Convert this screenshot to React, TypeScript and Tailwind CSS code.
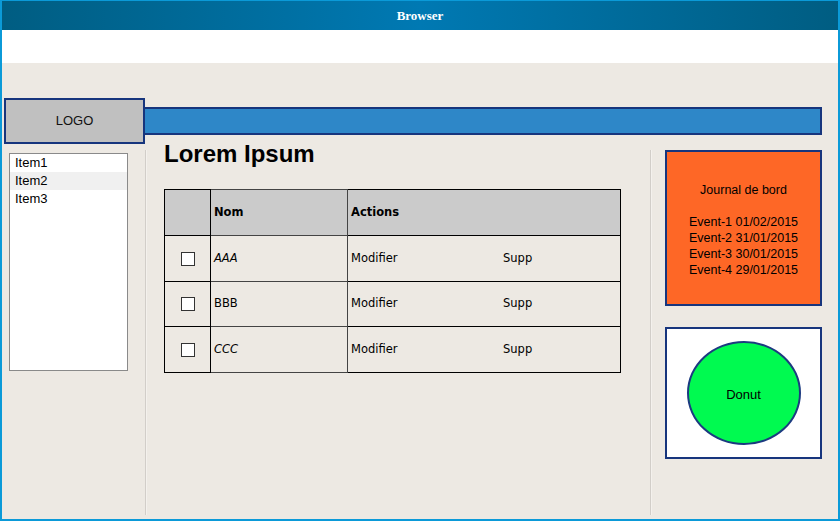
import React from "react";

const rows = [
  { name: "AAA", italic: true },
  { name: "BBB", italic: false },
  { name: "CCC", italic: true },
];

const events = [
  "Event-1 01/02/2015",
  "Event-2 31/01/2015",
  "Event-3 30/01/2015",
  "Event-4 29/01/2015",
];

const sketch = { fontFamily: '"DejaVu Sans", sans-serif' };

export default function App() {
  return (
    <div
      className="flex h-[521px] w-[840px] flex-col border-2 border-t border-[#0b9ad8] bg-[#ede9e3]"
      style={{ fontFamily: '"Liberation Sans", Arial, sans-serif' }}
    >
      {/* title bar */}
      <div className="flex h-[29px] items-center justify-center bg-linear-to-r from-[#005d82] via-[#0079b3] to-[#005d82]">
        <span
          className="text-[13px] font-bold text-white"
          style={{ fontFamily: '"Liberation Serif", "Times New Roman", serif' }}
        >
          Browser
        </span>
      </div>
      <div className="h-[33px] bg-white" />

      <div className="flex flex-1 flex-col pt-[35px]">
        {/* header */}
        <div className="flex">
          <div className="ml-[2px] flex h-[46px] w-[141px] items-center justify-center border-2 border-[#17357d] bg-[#c0c0c0] text-[13px] text-[#111]">
            LOGO
          </div>
          <div className="mr-[16px] mt-[9px] h-[28px] flex-1 border-2 border-l-0 border-[#17357d] bg-[#2e87c8]" />
        </div>

        {/* body */}
        <div className="flex flex-1">
          <div className="w-[143px] pl-[7px] pt-[9px]">
            <div className="h-[218px] w-[119px] border border-[#8a8a8a] bg-white text-[13px] text-black">
              <div className="h-[18px] pl-[5px] leading-[18px]">Item1</div>
              <div className="h-[18px] bg-[#f0f0f0] pl-[5px] leading-[18px]">Item2</div>
              <div className="h-[18px] pl-[5px] leading-[18px]">Item3</div>
            </div>
          </div>

          <div className="mb-[4px] mt-[6px] w-[2px] border-l border-[#d2cec9] bg-[#f4f1ed]" />

          <div className="w-[503px] pl-[17px]">
            <h1 className="text-[24px] font-bold leading-[20px] text-black">Lorem Ipsum</h1>
            <table
              className="mt-[25px] w-[457px] table-fixed border-collapse border border-black text-[11.5px] text-black"
              style={sketch}
            >
              <colgroup>
                <col className="w-[46px]" />
                <col className="w-[137px]" />
                <col />
              </colgroup>
              <thead>
                <tr className="h-[46px] bg-[#cbcbcb]">
                  <th className="border border-black" />
                  <th className="border border-[#444] pl-[3px] text-left font-bold">Nom</th>
                  <th className="border border-black pl-[3px] text-left font-bold">Actions</th>
                </tr>
              </thead>
              <tbody>
                {rows.map((r, i) => (
                  <tr key={r.name} className={i === 1 ? "h-[45px]" : "h-[46px]"}>
                    <td className="border border-black">
                      <div className="mx-auto h-[14px] w-[14px] border border-[#333] bg-white" />
                    </td>
                    <td className={"border border-[#444] pl-[3px] " + (r.italic ? "italic" : "")}>
                      {r.name}
                    </td>
                    <td className="border border-black pl-[3px]">
                      <div className="flex">
                        <span className="w-[152px]">Modifier</span>
                        <span>Supp</span>
                      </div>
                    </td>
                  </tr>
                ))}
              </tbody>
            </table>
          </div>

          <div className="mb-[4px] mt-[6px] w-[2px] border-l border-[#d2cec9] bg-[#f4f1ed]" />

          <div className="flex flex-col pl-[13px] pt-[6px]">
            <div className="flex h-[156px] w-[157px] flex-col items-center justify-center border-2 border-[#17357d] bg-[#fe6726] pt-[4px] text-[12.5px] leading-[16px] text-black">
              <div>Journal de bord</div>
              <div className="h-[16px]" />
              {events.map((e) => (
                <div key={e}>{e}</div>
              ))}
            </div>
            <div className="mt-[21px] flex h-[132px] w-[157px] items-center justify-center border-2 border-[#17357d] bg-white">
              <div className="flex h-[104px] w-[114px] items-center justify-center rounded-[50%] border-2 border-[#1c3a80] bg-[#00fa50] pt-[3px] text-[13px] text-black">
                Donut
              </div>
            </div>
          </div>
        </div>
      </div>
    </div>
  );
}
